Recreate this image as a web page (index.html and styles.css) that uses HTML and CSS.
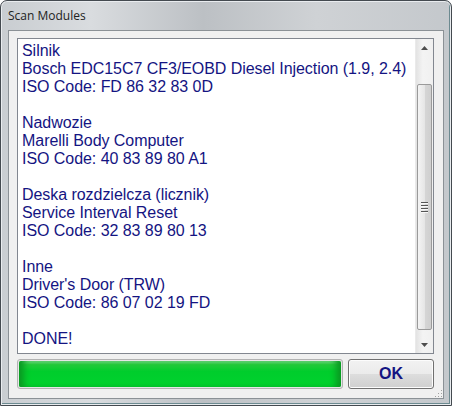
FILE: index.html
```html
<!DOCTYPE html>
<html lang="pl">
<head>
  <meta charset="UTF-8">
  <title>Scan Modules</title>
  <link rel="stylesheet" href="styles.css">
</head>
<body>
  <div class="window">
    <!-- Title bar -->
    <div class="titlebar">Scan Modules</div>

    <div class="client">
      <!-- Results list -->
      <div class="listbox">
        <div class="list-text">
          <div>Silnik</div>
          <div>Bosch EDC15C7 CF3/EOBD Diesel Injection (1.9, 2.4)</div>
          <div>ISO Code: FD 86 32 83 0D</div>
          <div class="blank"></div>
          <div>Nadwozie</div>
          <div>Marelli Body Computer</div>
          <div>ISO Code: 40 83 89 80 A1</div>
          <div class="blank"></div>
          <div>Deska rozdzielcza (licznik)</div>
          <div>Service Interval Reset</div>
          <div>ISO Code: 32 83 89 80 13</div>
          <div class="blank"></div>
          <div>Inne</div>
          <div>Driver's Door (TRW)</div>
          <div>ISO Code: 86 07 02 19 FD</div>
          <div class="blank"></div>
          <div>DONE!</div>
        </div>
        <div class="scrollbar">
          <div class="sb-arrow">
            <svg width="7" height="4" viewBox="0 0 7 4"><path d="M0 4 L3.5 0 L7 4 Z" fill="#4d4d4d"/></svg>
          </div>
          <div class="sb-track">
            <div class="sb-thumb">
              <div class="grip"><span></span><span></span><span></span><span></span></div>
            </div>
          </div>
          <div class="sb-arrow">
            <svg width="7" height="4" viewBox="0 0 7 4"><path d="M0 0 L3.5 4 L7 0 Z" fill="#4d4d4d"/></svg>
          </div>
        </div>
      </div>

      <!-- Progress and OK -->
      <div class="bottom-row">
        <div class="progress"><div class="progress-fill"></div></div>
        <button class="ok-btn">OK</button>
      </div>

      <div class="size-grip">
        <svg width="10" height="10" viewBox="0 0 10 10">
          <rect x="8" y="2" width="1" height="1" fill="#a0a0a0"/>
          <rect x="5" y="5" width="1" height="1" fill="#a0a0a0"/>
          <rect x="8" y="5" width="1" height="1" fill="#a0a0a0"/>
          <rect x="2" y="8" width="1" height="1" fill="#a0a0a0"/>
          <rect x="5" y="8" width="1" height="1" fill="#a0a0a0"/>
          <rect x="8" y="8" width="1" height="1" fill="#a0a0a0"/>
        </svg>
      </div>
    </div>
  </div>
</body>
</html>
```

FILE: styles.css
```css
/* Page */
body {
  margin: 0;
  background: #fff;
  font-family: "Liberation Sans", Arial, sans-serif;
}
.window {
  width: 452px;
  height: 406px;
  box-sizing: border-box;
  border: 1px solid #444a50;
  border-radius: 7px 7px 0 0;
  background: linear-gradient(90deg, #c9cdd1 0%, #d9dcdf 20%, #bcc0c4 45%, #cfd2d5 70%, #c4c8cc 100%);
  padding: 0 7px 7px 7px;
  display: flex;
  flex-direction: column;
  box-shadow: inset 0 0 0 1px #e9ecef, inset -2px -2px 0 #6c8a90;
}
.titlebar {
  height: 29px;
  line-height: 29px;
  font-family: "Open Sans", "Noto Sans", sans-serif;
  font-size: 12px;
  color: #222;
}
.client {
  flex: 1;
  position: relative;
  background: #f0f0f0;
  border: 1px solid #8b9196;
  padding: 7px 9px 9px 8px;
  display: flex;
  flex-direction: column;
}
/* List box */
.listbox {
  height: 316px;
  box-sizing: border-box;
  border: 1px solid #828790;
  background: #fff;
  display: flex;
}
.list-text {
  flex: 1;
  padding: 3px 0 0 4px;
  color: #141482;
  font-size: 16px;
  line-height: 18px;
  letter-spacing: -0.05px;
  white-space: nowrap;
  overflow: hidden;
}
.blank {
  height: 18px;
}
/* Scrollbar */
.scrollbar {
  width: 17px;
  background: linear-gradient(90deg, #e3e3e3, #f3f3f3 40%, #f0f0f0);
  border-left: 1px solid #eaeaea;
  display: flex;
  flex-direction: column;
}
.sb-arrow {
  height: 17px;
  display: flex;
  align-items: center;
  justify-content: center;
}
.sb-track {
  flex: 1;
  padding: 28px 0 6px 0;
  display: flex;
}
.sb-thumb {
  flex: 1;
  margin: 0 1px;
  border: 1px solid #9a9a9a;
  border-radius: 2px;
  background: linear-gradient(90deg, #f4f4f4, #e6e6e6 50%, #d6d6d6 51%, #cfcfcf);
  display: flex;
  align-items: center;
  justify-content: center;
}
.grip {
  display: flex;
  flex-direction: column;
  gap: 1px;
}
.grip span {
  display: block;
  width: 7px;
  height: 1px;
  background: #555;
  border-bottom: 1px solid #f8f8f8;
}
/* Bottom row */
.bottom-row {
  margin-top: 5px;
  height: 30px;
  display: flex;
  gap: 5px;
}
.progress {
  flex: 1;
  box-sizing: border-box;
  border: 1px solid #b2b2b2;
  border-radius: 3px;
  background: #e6e6e6;
  padding: 1px;
}
.progress-fill {
  height: 100%;
  border-radius: 2px;
  background: linear-gradient(180deg, #7fe28f 0%, #24c93b 14%, #00cd2c 40%, #00d22e 100%);
  box-shadow: inset 8px 0 6px -3px #0a9a22, inset -8px 0 6px -3px #0a9a22;
}
.ok-btn {
  width: 86px;
  border: 1px solid #707070;
  border-radius: 3px;
  background: linear-gradient(180deg, #f2f2f2 0%, #ebebeb 50%, #dddddd 51%, #cfcfcf 100%);
  box-shadow: inset 0 0 0 1px #fcfcfc;
  font-family: "Liberation Sans", Arial, sans-serif;
  font-weight: bold;
  font-size: 16px;
  color: #141482;
  padding: 0;
}
.size-grip {
  position: absolute;
  right: 0;
  bottom: 0;
  line-height: 0;
}
```
